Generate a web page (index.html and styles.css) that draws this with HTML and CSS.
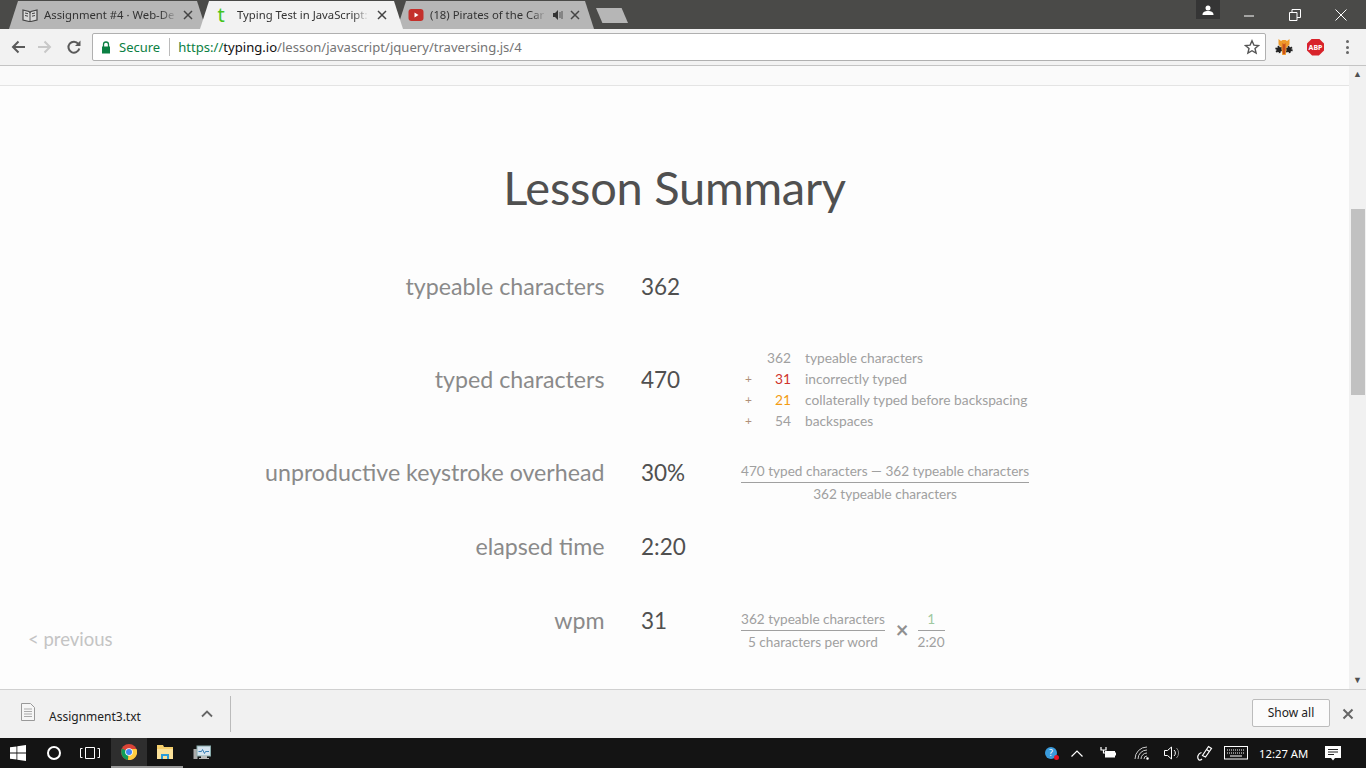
FILE: index.html
```html
<!DOCTYPE html>
<html lang="en-us">
  <head>
    <meta charset="utf-8">
    <title>Typing Test in JavaScript</title>
    <link rel="stylesheet" href="styles.css">
  </head>
  <body>
    <!-- Tab strip -->
    <div class="tabstrip">
      <div class="tab">
        <svg class="favicon" viewBox="0 0 16 16"><path d="M1 3l6 1.500 1 1 1-1 6-1.500v10l-6 1.500h-2l-6-1.500z" fill="#d8d8d8" stroke="#444" stroke-width="1.200"/><path d="M8 5v9M3 6l3 .7M3 8.500l3 .7M10 6.700l3-.7M10 9.200l3-.7" stroke="#444"/></svg>
        <span class="tab-title">Assignment #4 · Web-De</span>
        <svg class="tab-close" viewBox="0 0 10 10"><path d="M1 1l8 8M9 1l-8 8" stroke="#444" stroke-width="1.500"/></svg>
      </div>
      <div class="tab tab-active">
        <span class="favicon-t">t</span>
        <span class="tab-title">Typing Test in JavaScript:</span>
        <svg class="tab-close" viewBox="0 0 10 10"><path d="M1 1l8 8M9 1l-8 8" stroke="#444" stroke-width="1.500"/></svg>
      </div>
      <div class="tab tab-video">
        <svg class="favicon" viewBox="0 0 16 16"><rect x="0.500" y="2" width="15" height="12" rx="3" fill="#c4302b"/><path d="M6.500 5.500l4 2.500-4 2.500z" fill="#fff"/></svg>
        <span class="tab-title">(18) Pirates of the Car</span>
        <svg class="tab-sound" viewBox="0 0 12 12"><path d="M1 4h2l3-3v10l-3-3h-2z" fill="#333"/><path d="M8 3v6M10 2v8" stroke="#555"/></svg>
        <svg class="tab-close" viewBox="0 0 10 10"><path d="M1 1l8 8M9 1l-8 8" stroke="#444" stroke-width="1.500"/></svg>
      </div>
      <div class="tab-new"></div>
      <div class="spacer"></div>
      <div class="profile">
        <svg viewBox="0 0 12 10" width="12" height="10"><circle cx="6" cy="3" r="2.500" fill="#fff"/><path d="M0.500 10c0-3 2-4 5.500-4s5.500 1 5.500 4z" fill="#fff"/></svg>
      </div>
      <div class="winctl">
        <svg viewBox="0 0 12 12" width="12" height="12"><path d="M1 7h10" stroke="#fff"/></svg>
      </div>
      <div class="winctl">
        <svg viewBox="0 0 12 12" width="12" height="12" fill="none" stroke="#fff"><path d="M.5 3.500h7.500v8h-7.500zM3 3.500v-3h8.500v8h-3.500"/></svg>
      </div>
      <div class="winctl">
        <svg viewBox="0 0 12 12" width="12" height="12"><path d="M.5 .5l11 11M11.500 .5l-11 11" stroke="#fff"/></svg>
      </div>
    </div>

    <!-- Toolbar with the address bar -->
    <div class="toolbar">
      <svg class="navbtn nav-back" viewBox="0 0 16 16"><path d="M15 8h-12M8.500 2.500l-5.500 5.500 5.500 5.500" fill="none" stroke="#5a5a5a" stroke-width="2"/></svg>
      <svg class="navbtn nav-forward" viewBox="0 0 16 16"><path d="M1 8h12M7.500 2.500l5.500 5.500-5.500 5.500" fill="none" stroke="#c8c8c8" stroke-width="2"/></svg>
      <svg class="navbtn nav-reload" viewBox="0 0 16 16"><path d="M13.300 9.500a5.500 5.500 0 1 1-1-4.700" fill="none" stroke="#5a5a5a" stroke-width="2"/><path d="M14.500 1.500v5.500h-5.500z" fill="#5a5a5a"/></svg>
      <div class="omnibox">
        <svg class="lock" viewBox="0 0 10 13"><path d="M2.500 6v-2.500a2.500 2.500 0 0 1 5 0v2.500" fill="none" stroke="#0b8043" stroke-width="1.300"/><rect x="1" y="5.500" width="8" height="7" fill="#0b8043"/></svg>
        <span class="secure">Secure</span>
        <span class="omni-sep"></span>
        <span class="url"><span class="url-scheme">https://</span><span class="url-host">typing.io</span>/lesson/javascript/jquery/traversing.js/4</span>
        <svg class="star" viewBox="0 0 16 16"><path d="M8 1.800l1.900 4.300 4.600.4-3.500 3 1.100 4.600-4.100-2.400-4.100 2.400 1.100-4.600-3.500-3 4.600-.4z" fill="none" stroke="#555" stroke-width="1.400"/></svg>
      </div>
      <svg class="ext" viewBox="0 0 18 18">
        <circle cx="4" cy="11.500" r="2.600" fill="#222" stroke="#222" stroke-width="2.400" stroke-dasharray="1.500 1.200"/>
        <circle cx="14" cy="11.500" r="2.600" fill="#222" stroke="#222" stroke-width="2.400" stroke-dasharray="1.500 1.200"/>
        <path d="M3.500 1l2.500 2 1.500-1h3l1.500 1 2.500-2v5.500l-3 3-.7 7.500h-3.600l-.7-7.500-3-3z" fill="#ef9a2a"/>
        <path d="M7.500 5l1.500 1.500 1.500-1.500v6l-.5 5h-2l-.5-5z" fill="#c8501c"/>
      </svg>
      <div class="abp">ABP</div>
      <div class="menu-dots"><i></i><i></i><i></i></div>
    </div>

    <!-- Page -->
    <div class="viewport">
      <div class="page">
        <div class="site-band"></div>
        <h1 class="summary-title">Lesson Summary</h1>

        <div class="stat">
          <div class="stat-label">typeable characters</div>
          <div class="stat-value">362</div>
        </div>

        <div class="stat">
          <div class="stat-label">typed characters</div>
          <div class="stat-value">470</div>
          <div class="stat-detail">
            <div class="sum-row"><span class="sum-op"></span><span class="sum-num">362</span><span>typeable characters</span></div>
            <div class="sum-row"><span class="sum-op">+</span><span class="sum-num num-red">31</span><span>incorrectly typed</span></div>
            <div class="sum-row"><span class="sum-op">+</span><span class="sum-num num-orange">21</span><span>collaterally typed before backspacing</span></div>
            <div class="sum-row"><span class="sum-op">+</span><span class="sum-num">54</span><span>backspaces</span></div>
          </div>
        </div>

        <div class="stat">
          <div class="stat-label">unproductive keystroke overhead</div>
          <div class="stat-value">30%</div>
          <div class="stat-detail">
            <div class="frac">
              <div class="frac-top">470 typed characters — 362 typeable characters</div>
              <div class="frac-bottom">362 typeable characters</div>
            </div>
          </div>
        </div>

        <div class="stat stat-short">
          <div class="stat-label">elapsed time</div>
          <div class="stat-value">2:20</div>
        </div>

        <div class="stat">
          <div class="stat-label">wpm</div>
          <div class="stat-value">31</div>
          <div class="stat-detail detail-product">
            <div class="frac">
              <div class="frac-top">362 typeable characters</div>
              <div class="frac-bottom">5 characters per word</div>
            </div>
            <span class="times">×</span>
            <div class="frac">
              <div class="frac-top num-green">1</div>
              <div class="frac-bottom">2:20</div>
            </div>
          </div>
        </div>

        <a class="prev-link">&lt; previous</a>
      </div>

      <div class="scrollbar">
        <div class="scroll-arrow">▲</div>
        <div class="scroll-track"><div class="scroll-thumb"></div></div>
        <div class="scroll-arrow">▼</div>
      </div>
    </div>

    <!-- Download shelf -->
    <div class="shelf">
      <div class="download">
        <svg class="file-icon" viewBox="0 0 14 18"><path d="M.5 .5h9l4 4v13h-13z" fill="#f6f6f6" stroke="#999"/><path d="M3 6h8M3 8.500h8M3 11h8M3 13.500h8" stroke="#aaa"/></svg>
        <span class="file-name">Assignment3.txt</span>
        <svg class="file-caret" viewBox="0 0 12 8"><path d="M1 6.500l5-5 5 5" fill="none" stroke="#666" stroke-width="1.800"/></svg>
      </div>
      <div class="spacer"></div>
      <div class="show-all">Show all</div>
      <svg class="shelf-close" viewBox="0 0 12 12"><path d="M1.500 1.500l9 9M10.500 1.500l-9 9" stroke="#666" stroke-width="2"/></svg>
    </div>

    <!-- Windows taskbar -->
    <div class="taskbar">
      <svg class="task-start" viewBox="0 0 16 16"><path d="M0 2.300l6.500-.9v6.200h-6.500zM7.300 1.300l8.700-1.300v7.600h-8.700zM0 8.400h6.500v6.200l-6.500-.9zM7.300 8.400h8.700v7.600l-8.700-1.300z" fill="#fff"/></svg>
      <svg class="task-cortana" viewBox="0 0 16 16"><circle cx="8" cy="8" r="6" fill="none" stroke="#fff" stroke-width="2"/></svg>
      <svg class="task-view" viewBox="0 0 20 12" fill="none" stroke="#fff"><path d="M5.500 .5h9v11h-9zM2.500 1.500h-2v9h2M17.500 1.500h2v9h-2"/></svg>
      <div class="task-app task-chrome">
        <svg viewBox="0 0 16 16" width="16" height="16"><circle cx="8" cy="8" r="8" fill="#db4437"/><path d="M8 8l-7 -3.500a8 8 0 0 0 6 11.400z" fill="#0f9d58"/><path d="M8 5h7.500a8 8 0 0 1-8.500 11z" fill="#ffcd40"/><circle cx="8" cy="8" r="3.800" fill="#fff"/><circle cx="8" cy="8" r="3" fill="#4285f4"/></svg>
      </div>
      <div class="task-app task-folder">
        <svg viewBox="0 0 18 16" width="18" height="16"><path d="M1 1h6l1 2h9v12h-16z" fill="#f5cf6b"/><path d="M1 5h16v10h-16z" fill="#fbe29a"/><path d="M5 15v-5h8v5h-2v-3h-4v3z" fill="#2b9cd8"/></svg>
      </div>
      <div class="task-app task-monitor">
        <svg viewBox="0 0 18 16" width="18" height="16"><rect x="0.500" y="4" width="4" height="10" fill="#aaa"/><rect x="4" y="1" width="13.500" height="10" fill="#d5e3ee" stroke="#8aa"/><path d="M5.500 6.500h3l1-2 2 4 1-2h3.500" fill="none" stroke="#3a7fb5"/><path d="M8 11h6v2h2v1h-10v-1h2z" fill="#bbb"/></svg>
      </div>
      <div class="spacer"></div>
      <div class="tray">
        <div class="tray-help">?<i></i></div>
        <svg class="tray-chevron" viewBox="0 0 12 7"><path d="M.5 6.500l5.500-5.500 5.500 5.500" fill="none" stroke="#fff" stroke-width="1.200"/></svg>
        <svg class="tray-battery" viewBox="0 0 16 12"><path d="M1 0v3h5v-3M3.500 3v3h2" fill="none" stroke="#fff" stroke-width="1.200"/><path d="M5 4h10v6.500h-10z" fill="#fff"/><path d="M15 5.500h1v3h-1z" fill="#fff"/></svg>
        <svg class="tray-wifi" viewBox="0 0 16 14" fill="none" stroke="#ccc"><path d="M1 13a12 12 0 0 1 12-12M4 13a9 9 0 0 1 9-9M7 13a6 6 0 0 1 6-6M10 13a3 3 0 0 1 3-3"/><circle cx="13.500" cy="12.500" r="1" fill="#fff"/></svg>
        <svg class="tray-volume" viewBox="0 0 16 14" fill="none" stroke="#fff"><path d="M.5 4.500h3l4-3.500v12l-4-3.500h-3z"/><path d="M10 4a4 4 0 0 1 0 6"/><path d="M12.500 2a7 7 0 0 1 0 10" stroke="#888"/></svg>
        <svg class="tray-pen" viewBox="0 0 16 16" fill="none" stroke="#fff" stroke-width="1.200"><path d="M5.500 10.500l6-9 3 2-6 8.500z"/><path d="M9.500 4.500l3 2"/><path d="M4.500 7.500c-3.500 1-5 5-2.500 7.500 1 .5 2 0 3-1"/></svg>
        <svg class="tray-keyboard" viewBox="0 0 24 14" fill="none" stroke="#fff"><rect x=".5" y=".5" width="23" height="12.500"/><path d="M3 4h18M3 7h18" stroke-dasharray="1 1"/><path d="M6 10h12"/></svg>
        <span class="tray-clock">12:27 AM</span>
        <svg class="tray-notify" viewBox="0 0 16 15"><path d="M0 0h16v12h-6l-2 2.500-2-2.500h-6z" fill="#fff"/><path d="M3 3.500h10M3 6h10M3 8.500h6" stroke="#222"/></svg>
      </div>
    </div>
  </body>
</html>
```

FILE: styles.css
```css
/* General */
html, body {
  margin: 0;
  padding: 0;
  height: 768px;
  overflow: hidden;
}

body {
  display: flex;
  flex-direction: column;
  font-family: "Noto Sans", Arial, sans-serif;
  font-size: 12px;
  color: #333;
}

.spacer {
  flex: 1;
}

/* Tab strip */
.tabstrip {
  height: 29px;
  flex: none;
  display: flex;
  align-items: flex-start;
  padding: 0 2px 0 9px;
  background: #4a4a48;
}

.tab {
  width: 197px;
  height: 28px;
  margin-top: 1px;
  margin-right: -6px;
  padding: 0 13px 1px 13px;
  box-sizing: border-box;
  display: flex;
  align-items: center;
  gap: 6px;
  background: #b6b6b6;
  clip-path: polygon(0 100%, 9px 0, calc(100% - 9px) 0, 100% 100%);
  color: #333;
}

.tab-active {
  background: #f2f2f2;
  position: relative;
  z-index: 1;
  width: 203px;
  padding: 0 16px 1px 13px;
  gap: 8px;
}

.tab-video {
  padding-left: 11px;
  padding-right: 14px;
}

.favicon {
  width: 16px;
  height: 16px;
  flex: none;
}

.favicon-t {
  width: 16px;
  flex: none;
  font-size: 20px;
  line-height: 24px;
  color: #44c41c;
  text-align: center;
}

.tab-title {
  flex: 1;
  overflow: hidden;
  white-space: nowrap;
  font-size: 11.300px;
  -webkit-mask-image: linear-gradient(to right, #000 88%, transparent);
  mask-image: linear-gradient(to right, #000 88%, transparent);
}

.tab-sound {
  width: 12px;
  height: 12px;
  flex: none;
}

.tab-close {
  width: 10px;
  height: 10px;
  flex: none;
}

.tab-new {
  width: 32px;
  height: 15px;
  margin: 8px 0 0 8px;
  background: #b6b6b6;
  clip-path: polygon(0 0, 80% 0, 100% 100%, 20% 100%);
}

.profile {
  width: 24px;
  height: 19px;
  display: flex;
  align-items: center;
  justify-content: center;
  background: #353535;
  margin-right: 6px;
}

.winctl {
  width: 46px;
  height: 29px;
  display: flex;
  align-items: center;
  justify-content: center;
}

/* Toolbar */
.toolbar {
  height: 37px;
  flex: none;
  display: flex;
  align-items: center;
  padding-left: 10px;
  box-sizing: border-box;
  background: #f2f2f2;
  border-bottom: 1px solid #c4c4c4;
}

.navbtn {
  width: 16px;
  height: 16px;
}

.nav-back {
  margin-right: 11px;
}

.nav-forward {
  margin-right: 13px;
}

.nav-reload {
  margin-right: 10px;
}

.omnibox {
  width: 1174px;
  height: 28px;
  padding: 0 5px 0 8px;
  box-sizing: border-box;
  display: flex;
  align-items: center;
  background: #fff;
  border: 1px solid #b0b0b0;
  border-radius: 2px;
}

.lock {
  width: 10px;
  height: 13px;
  margin-right: 8px;
}

.secure {
  color: #0b8043;
  font-size: 13px;
}

.omni-sep {
  width: 1px;
  height: 18px;
  margin: 0 8px 0 9px;
  background: #bbb;
}

.url {
  flex: 1;
  font-size: 13.100px;
  color: #757575;
  white-space: nowrap;
}

.url-scheme {
  color: #0b8043;
}

.url-host {
  color: #111;
}

.star {
  width: 16px;
  height: 16px;
}

.ext {
  width: 18px;
  height: 18px;
  margin-left: 9px;
}

.abp {
  width: 17px;
  height: 17px;
  margin-left: 14px;
  background: #d8232a;
  clip-path: polygon(30% 0, 70% 0, 100% 30%, 100% 70%, 70% 100%, 30% 100%, 0 70%, 0 30%);
  color: #fff;
  font-size: 7px;
  font-weight: bold;
  line-height: 17px;
  text-align: center;
}

.menu-dots {
  margin-left: 22px;
  display: flex;
  flex-direction: column;
  gap: 2.500px;
}

.menu-dots i {
  width: 3px;
  height: 3px;
  background: #666;
  border-radius: 50%;
}

/* Page */
.viewport {
  flex: 1;
  min-height: 0;
  display: flex;
}

.page {
  flex: 1;
  position: relative;
  overflow: hidden;
  background: #fdfdfd;
  font-family: Lato, Arial, sans-serif;
}

.site-band {
  height: 19px;
  background: #fafafa;
  border-bottom: 1px solid #e4e4e4;
}

.summary-title {
  margin: 0;
  padding-top: 68px;
  height: 85px;
  font-size: 47px;
  line-height: 66px;
  font-weight: 400;
  letter-spacing: -0.250px;
  color: #505050;
  text-align: center;
}

/* Rows of the summary */
.stat {
  height: 93px;
  display: flex;
  align-items: center;
  font-size: 23.200px;
}

.stat-short {
  height: 55px;
}

.stat-label {
  width: 604.500px;
  text-align: right;
  color: #8a8a8a;
}

.stat-value {
  width: 100px;
  padding: 2px 0 0 36.500px;
  font-size: 22.500px;
  color: #505050;
}

.stat-detail {
  margin-top: 20px;
  font-size: 13.750px;
  color: #a0a0a0;
}

.detail-product {
  display: flex;
  align-items: center;
}

.sum-row {
  display: flex;
  height: 21px;
  line-height: 21px;
}

.sum-op {
  width: 16px;
  font-size: 12px;
  color: #b09078;
  margin-left: 4px;
}

.sum-num {
  width: 30px;
  margin-right: 14px;
  text-align: right;
}

.num-red {
  color: #d0342c;
}

.num-orange {
  color: #f39c12;
}

.num-green {
  color: #a0c8a0;
}

.frac {
  text-align: center;
  font-size: 13.600px;
}

.frac-top {
  height: 23px;
  line-height: 25px;
  border-bottom: 1px solid #a0a0a0;
}

.frac-bottom {
  height: 21px;
  line-height: 22px;
}

.times {
  margin: 0 9px 0 11px;
  font-size: 22px;
  line-height: 22px;
  font-weight: bold;
  color: #909090;
}

.prev-link {
  position: absolute;
  left: 28px;
  top: 562px;
  font-size: 18.500px;
  color: #c4c4c4;
}

/* Scrollbar */
.scrollbar {
  width: 17px;
  flex: none;
  display: flex;
  flex-direction: column;
  background: #f1f1f1;
}

.scroll-arrow {
  height: 17px;
  font-size: 9px;
  line-height: 16px;
  text-align: center;
  color: #505050;
}

.scroll-track {
  flex: 1;
  padding-top: 126px;
}

.scroll-thumb {
  height: 186px;
  margin: 0 1px 0 2px;
  background: #c1c1c1;
}

/* Download shelf */
.shelf {
  height: 49px;
  flex: none;
  box-sizing: border-box;
  display: flex;
  align-items: center;
  background: #f1f1f1;
  border-top: 1px solid #d0d0d0;
}

.download {
  width: 231px;
  height: 36px;
  box-sizing: border-box;
  display: flex;
  align-items: center;
  border-right: 1px solid #bbb;
}

.file-icon {
  width: 14px;
  height: 18px;
  margin: -4px 14px 0 21px;
}

.file-name {
  width: 152px;
  margin-top: 4px;
  color: #222;
}

.file-caret {
  width: 12px;
  height: 8px;
}

.show-all {
  width: 78px;
  height: 28px;
  margin-bottom: 2px;
  box-sizing: border-box;
  background: #fbfbfb;
  border: 1px solid #bcbcbc;
  border-radius: 2px;
  color: #222;
  line-height: 26px;
  text-align: center;
}

.shelf-close {
  width: 12px;
  height: 12px;
  margin: 0 12px;
}

/* Taskbar */
.taskbar {
  height: 30px;
  flex: none;
  display: flex;
  align-items: center;
  background: #141414;
  color: #fff;
}

.task-start {
  width: 16px;
  height: 16px;
  margin: 0 20px 0 10px;
}

.task-cortana {
  width: 16px;
  height: 16px;
  margin-right: 18px;
}

.task-view {
  width: 20px;
  height: 12px;
  margin-right: 11px;
}

.task-app {
  width: 36px;
  height: 30px;
  box-sizing: border-box;
  display: flex;
  align-items: center;
  justify-content: center;
  border-bottom: 2px solid #999;
}

.task-chrome {
  background: #2e2e2e;
}

.task-monitor {
  border-bottom: none;
  margin-left: 1px;
}

.tray {
  display: flex;
  align-items: center;
  height: 30px;
}

.tray-help {
  position: relative;
  width: 12px;
  height: 12px;
  margin-right: 14px;
  border-radius: 50%;
  background: #3a9bdc;
  font-size: 9px;
  line-height: 12px;
  text-align: center;
}

.tray-help i {
  position: absolute;
  right: -2px;
  bottom: -1px;
  width: 5px;
  height: 5px;
  border-radius: 50%;
  background: #e81123;
}

.tray-chevron {
  width: 12px;
  height: 7px;
  margin-right: 17px;
}

.tray-battery {
  width: 16px;
  height: 12px;
  margin-right: 18px;
}

.tray-wifi {
  width: 16px;
  height: 14px;
  margin-right: 14px;
}

.tray-volume {
  width: 16px;
  height: 14px;
  margin-right: 17px;
}

.tray-pen {
  width: 16px;
  height: 16px;
  margin-right: 11px;
}

.tray-keyboard {
  width: 24px;
  height: 14px;
  margin-right: 11px;
}

.tray-clock {
  width: 49px;
  font-size: 11.300px;
  margin-right: 17px;
  white-space: nowrap;
}

.tray-notify {
  width: 16px;
  height: 15px;
  margin-right: 25px;
}
```
